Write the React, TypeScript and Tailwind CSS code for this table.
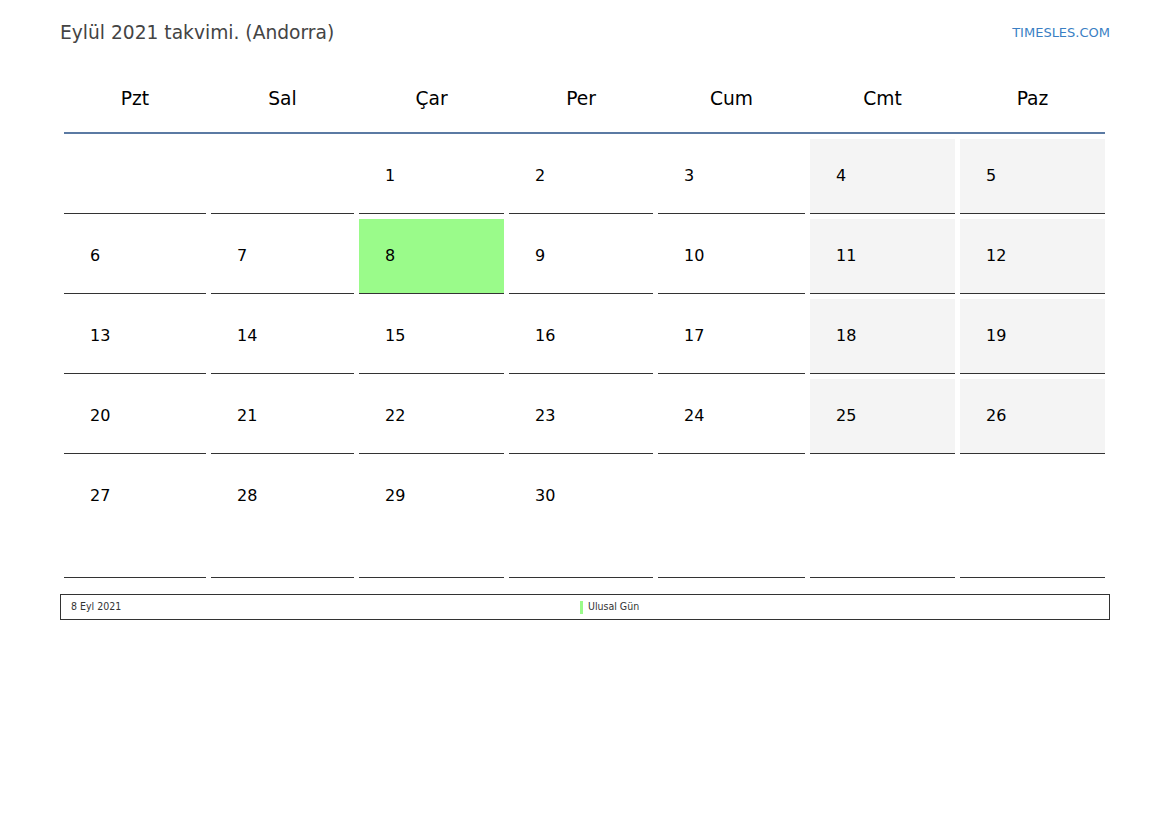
const days = ["Pzt", "Sal", "Çar", "Per", "Cum", "Cmt", "Paz"];

const weeks: (number | null)[][] = [
  [null, null, 1, 2, 3, 4, 5],
  [6, 7, 8, 9, 10, 11, 12],
  [13, 14, 15, 16, 17, 18, 19],
  [20, 21, 22, 23, 24, 25, 26],
  [27, 28, 29, 30, null, null, null],
];

const App = () => {
  return (
    <div className="w-[1169px] h-[827px] bg-white text-black font-['DejaVu_Sans',sans-serif]">
      {/* Title bar */}
      <div className="flex items-start justify-between pl-[60px] pr-[59px] pt-[20px]">
        <h1 className="text-[18.67px] leading-[26px] text-[#444]">Eylül 2021 takvimi. (Andorra)</h1>
        <span className="text-[13px] leading-[26px] text-[#3a7fc4]">TIMESLES.COM</span>
      </div>

      {/* Calendar */}
      <div className="ml-[64px] w-[1041px] mt-[21px]">
        <div className="grid grid-cols-[142px_143px_145px_144px_147px_145px_145px] gap-x-[5px] h-[67px] border-b-2 border-[#5b7aa3]">
          {days.map((d) => (
            <div key={d} className="flex items-center justify-center text-[18.67px] pb-[1px]">
              {d}
            </div>
          ))}
        </div>

        <div className="mt-[5px] flex flex-col gap-y-[5px]">
          {weeks.map((week, wi) => (
            <div
              key={wi}
              className="grid grid-cols-[142px_143px_145px_144px_147px_145px_145px] gap-x-[5px]"
            >
              {week.map((n, di) => {
                const weekend = di >= 5 && wi < 4;
                const holiday = n === 8;
                return (
                  <div
                    key={di}
                    className={`flex items-center pl-[26px] text-[16px] border-b border-[#333] ${
                      wi === 4 ? "h-[119px] items-start pt-[25px]" : "h-[75px]"
                    } ${holiday ? "bg-[#9afb8a]" : weekend ? "bg-[#f4f4f4]" : "bg-white"}`}
                  >
                    {n}
                  </div>
                );
              })}
            </div>
          ))}
        </div>
      </div>

      {/* Legend */}
      <div className="ml-[60px] mt-[16px] w-[1050px] h-[26px] border border-[#333] flex items-center text-[10.5px] text-[#333] font-['DejaVu_Sans_Condensed','DejaVu_Sans',sans-serif]">
        <span className="pl-[10px] w-[519px]">8 Eyl 2021</span>
        <span className="w-[3px] h-[13px] bg-[#9afb8a] mr-[5px]" />
        <span>Ulusal Gün</span>
      </div>
    </div>
  );
};

export default App;
